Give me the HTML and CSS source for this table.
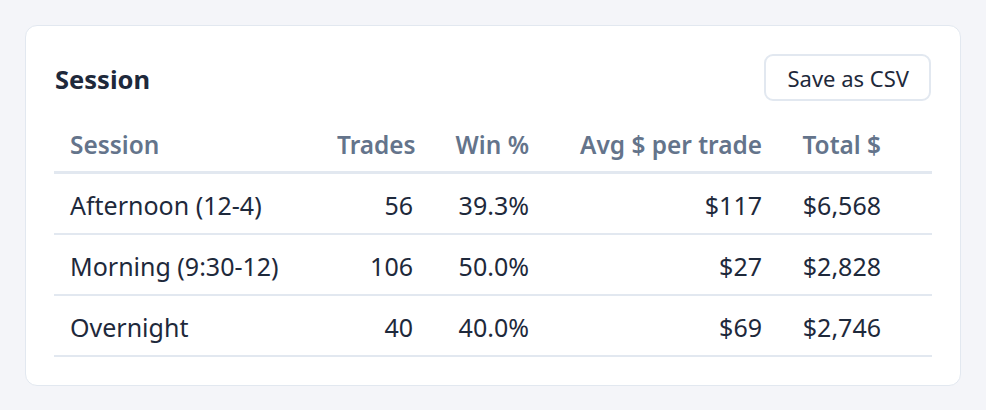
FILE: index.html
```html
<!DOCTYPE html>
<html>
<head>
<meta charset="utf-8">
<link rel="stylesheet" href="styles.css">
</head>
<body>
<div class="card">
  <div class="card-head">
    <h2 class="title">Session</h2>
    <button class="btn">Save as CSV</button>
  </div>
  <table class="tbl">
    <colgroup>
      <col class="c-session"><col class="c-trades"><col class="c-win"><col class="c-avg"><col class="c-total"><col>
    </colgroup>
    <thead>
      <tr><th class="l">Session</th><th>Trades</th><th>Win %</th><th>Avg $ per trade</th><th>Total $</th><th></th></tr>
    </thead>
    <tbody>
      <tr><td class="l">Afternoon (12-4)</td><td>56</td><td>39.3%</td><td>$117</td><td>$6,568</td><td></td></tr>
      <tr><td class="l">Morning (9:30-12)</td><td>106</td><td>50.0%</td><td>$27</td><td>$2,828</td><td></td></tr>
      <tr><td class="l">Overnight</td><td>40</td><td>40.0%</td><td>$69</td><td>$2,746</td><td></td></tr>
    </tbody>
  </table>
</div>
</body>
</html>
```
FILE: styles.css
```css
html, body { margin: 0; padding: 0; }
body {
  background: #f4f5f9;
  font-family: "Noto Sans", "Open Sans", sans-serif;
  color: #1e293b;
  padding: 25px;
}
.card {
  width: 878px;
  background: #fff;
  border: 1px solid #e2e8f0;
  border-radius: 12px;
  padding: 28px;
}
.card-head {
  display: flex;
  align-items: center;
  justify-content: space-between;
  height: 48px;
  margin-top: 1px;
}
.title {
  margin: 0 0 0 1px;
  font-size: 25.5px;
  font-weight: 700;
  color: #1e293b;
}
.btn {
  font-family: inherit;
  font-size: 22px;
  color: #1e293b;
  background: #fff;
  border: 2px solid #e2e8f0;
  border-radius: 9px;
  height: 47px;
  padding: 0 20px 0 21px;
  margin: -3px 1px 0 0;
}
.tbl {
  width: 100%;
  border-collapse: collapse;
  table-layout: fixed;
  margin-top: 16px;
}
.c-session { width: 267px; }
.c-trades { width: 108px; }
.c-win { width: 116px; }
.c-avg { width: 233px; }
.c-total { width: 119px; }
.tbl th, .tbl td {
  padding: 0 16px;
  text-align: right;
  white-space: nowrap;
}
.tbl .l { text-align: left; }
.tbl th {
  font-size: 24.4px;
  font-weight: 600;
  color: #64748b;
  height: 50px;
  padding-bottom: 2px;
  border-bottom: 3px solid #e2e8f0;
}
.tbl td {
  font-size: 25px;
  height: 56px;
  padding-top: 3px;
  border-bottom: 2px solid #e2e8f0;
}
```
